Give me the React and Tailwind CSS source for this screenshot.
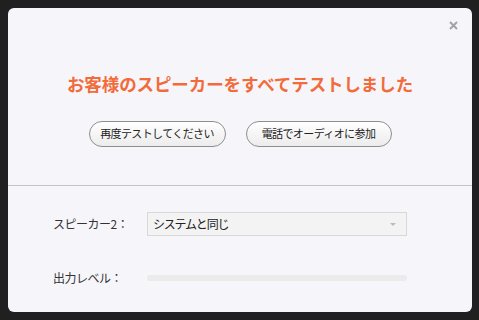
import React from 'react';

const jp = { fontFamily: '"Noto Sans CJK JP", "Noto Sans", sans-serif' };

const PillButton = ({ width, children }) => (
  <button className={`${width} h-[26px] rounded-full border border-[#8e8e8e] bg-gradient-to-b from-white to-[#ececec] text-[11px] tracking-[-0.6px] text-[#222] leading-none`}>
    {children}
  </button>
);

const App = () => {
  return (
    <div style={jp} className="w-[479px] h-[320px] bg-[#202020] pt-[8px] pl-[8px] overflow-hidden">
      <div className="w-[464px] h-[304px] bg-[#f6f6fa] rounded-[6px] flex flex-col">
        <div className="h-[177px] relative flex flex-col items-center">
          <svg className="absolute right-[14px] top-[13px]" width="9" height="9" viewBox="0 0 9 9">
            <path d="M1 1L8 8M8 1L1 8" stroke="#a3a3a3" strokeWidth="2" />
          </svg>
          <h1 className="mt-[67px] text-[17.5px] font-bold tracking-[-0.1px] text-[#f26b3a] leading-none">
            お客様のスピーカーをすべてテストしました
          </h1>
          <div className="mt-[28px] flex gap-[20px]">
            <PillButton width="w-[137px]">再度テストしてください</PillButton>
            <PillButton width="w-[146px]">電話でオーディオに参加</PillButton>
          </div>
        </div>
        <div className="h-px bg-[#c4c4c4]" />
        <div className="pl-[45px] pt-[26px] flex flex-col">
          <div className="flex items-center">
            <span className="w-[94px] text-[12px] text-[#333] tracking-[-0.5px]">スピーカー2：</span>
            <div className="w-[260px] h-[24px] border border-[#d8d8d8] bg-[#f3f3f3] flex items-center justify-between px-[5px]">
              <span className="text-[12px] text-[#222] tracking-[-1.2px]">システムと同じ</span>
              <span className="w-0 h-0 border-l-[3px] border-r-[3px] border-t-[3px] border-l-transparent border-r-transparent border-t-[#bbb] mr-[5px]" />
            </div>
          </div>
          <div className="flex items-center mt-[33px]">
            <span className="w-[94px] text-[12px] text-[#333] tracking-[-0.5px]">出力レベル：</span>
            <div className="w-[260px] h-[6px] rounded-full bg-[#ebebeb]" />
          </div>
        </div>
      </div>
    </div>
  );
};

export default App;
